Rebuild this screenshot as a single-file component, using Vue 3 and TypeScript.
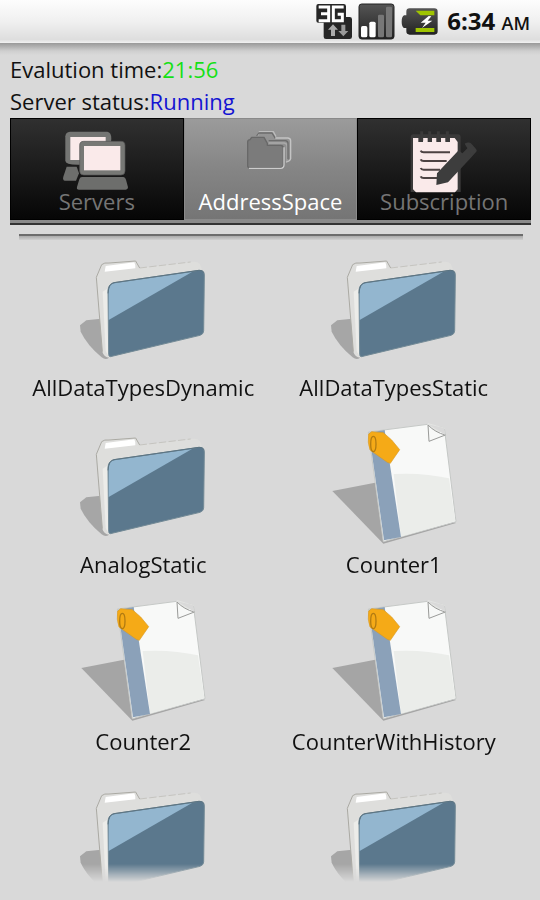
<script setup lang="ts">
import { ref } from 'vue'

type TabId = 'servers' | 'address' | 'subscription'
interface Node {
  name: string
  kind: 'folder' | 'item'
}

const tabs: { id: TabId; label: string }[] = [
  { id: 'servers', label: 'Servers' },
  { id: 'address', label: 'AddressSpace' },
  { id: 'subscription', label: 'Subscription' },
]
const active = ref<TabId>('address')

const nodes: Node[] = [
  { name: 'AllDataTypesDynamic', kind: 'folder' },
  { name: 'AllDataTypesStatic', kind: 'folder' },
  { name: 'AnalogStatic', kind: 'folder' },
  { name: 'Counter1', kind: 'item' },
  { name: 'Counter2', kind: 'item' },
  { name: 'CounterWithHistory', kind: 'item' },
  { name: '', kind: 'folder' },
  { name: '', kind: 'folder' },
]
</script>

<template>
  <div class="screen">
    <header class="statusbar">
      <svg class="status-icons" viewBox="36 0 372 129" aria-hidden="true">
        <defs>
          <linearGradient id="darkTile" x1="0" y1="0" x2="0" y2="1">
            <stop offset="0" stop-color="#555" />
            <stop offset="1" stop-color="#222" />
          </linearGradient>
        </defs>
        <path d="M46 12H122Q129 12 129 19V51H140Q147 51 147 58V110Q147 117 140 117H69Q62 117 62 110V68H46Q40 68 40 62V18Q40 12 46 12Z" fill="#262626" />
        <path d="M47 21H77V62H47M54 41H77" fill="none" stroke="#fff" stroke-width="9" />
        <path d="M122 21H91V62H118V43H104" fill="none" stroke="#fff" stroke-width="9" />
        <path d="M90 73L105 89H96V108H84V89H75Z" fill="#aaa" />
        <path d="M121 109L106 93H115V74H127V93H136Z" fill="#999" />
        <rect x="168" y="12" width="105" height="105" rx="8" fill="url(#darkTile)" stroke="#222" stroke-width="3" />
        <rect x="174" y="78" width="19" height="34" rx="5" fill="#fff" />
        <rect x="199" y="65" width="19" height="47" rx="5" fill="#fff" />
        <rect x="225" y="44" width="18" height="68" rx="4" fill="#777" />
        <rect x="249" y="20" width="18" height="92" rx="4" fill="#777" />
        <path d="M320 25H394Q404 25 404 35V94Q404 104 394 104H320Q310 104 310 94V84H303Q296 80 296 65Q296 50 303 46H310V35Q310 25 320 25Z" fill="url(#darkTile)" />
        <path d="M338 32H394V46H352ZM338 96V84H394V96Z" fill="#9fc400" />
        <path d="M377 48L353 68H368L357 84L388 62H374L385 49Z" fill="#fff" />
      </svg>
      <time class="clock">6:34 <span class="ampm">AM</span></time>
    </header>

    <main class="content">
      <section class="info">
        <p>Evalution time:<span class="time">21:56</span></p>
        <p>Server status:<span class="running">Running</span></p>
      </section>

      <nav class="tabs">
        <button
          v-for="tab in tabs"
          :key="tab.id"
          type="button"
          class="tab"
          :class="{ active: active === tab.id }"
          @click="active = tab.id"
        >
          <svg v-if="tab.id === 'servers'" class="tab-icon" viewBox="195 36 192 192" aria-hidden="true">
            <path d="M210 59H322Q334 61 334 80L325 158H233Q196 158 196 146V73Q197 60 210 59Z" fill="#747573" />
            <rect x="211" y="75" width="106" height="69" fill="#faeaea" />
            <path d="M200 164H230L237 184L228 206H194Q187 203 190 194Z" fill="#6d6e6c" />
            <rect x="239" y="88" width="136" height="101" rx="12" fill="#777875" stroke="#555" stroke-width="2" />
            <rect x="252" y="102" width="109" height="73" fill="#faeaea" />
            <path d="M246 195H370Q376 195 378 203L384 226Q384 233 377 233H237Q229 233 231 225L238 202Q240 195 246 195Z" fill="#6d6e6c" />
          </svg>
          <svg v-else-if="tab.id === 'address'" class="tab-icon" viewBox="0 0 192 192" aria-hidden="true">
            <g fill="none" stroke-width="4" stroke-linejoin="round">
              <path d="M58 36L64 23H106L114 38" stroke="#bcbcbc" />
              <path d="M56 36L62 27H102L112 43" stroke="#6c6c6c" />
              <path d="M112 42H150Q158 43 158 51V104Q156 112 144 114" stroke="#c4c4c4" />
              <path d="M92 57H138Q147 58 147 66V112" stroke="#a9a9a9" />
              <path d="M92 50H142Q150 51 150 58V106" stroke="#6c6c6c" />
              <path d="M29 126V54Q29 48 36 47L41 40H78L88 58V64H128Q136 65 136 72V124Q136 131 128 131H36Q29 131 29 126Z" fill="#7b7b7b" stroke="#686868" />
              <path d="M33 133H128Q138 132 138 122V70" stroke="#ccc" />
            </g>
          </svg>
          <svg v-else class="tab-icon" viewBox="426 36 192 192" aria-hidden="true">
            <path d="M430 67H564Q572 67 572 76V240H422V76Q422 67 430 67Z" fill="#3b3a3a" />
            <path d="M429 78H445V90H459V78H473V90H486V78H499V90H513V78H526V90H540V78H554L563 90V232L555 241H438L429 232Z" fill="#faeaea" />
            <path d="M455 58V86M479 58V86M505 58V86M532 58V86" stroke="#3b3a3a" stroke-width="9" />
            <path d="M452 116Q454 121 461 121H540M452 142Q454 147 461 147H530M452 168Q454 173 461 173H510M452 193Q454 198 461 198H502" fill="none" stroke="#4c4242" stroke-width="6" />
            <path d="M499 219L501 184L566 115L577 124L597 104L584 95Q597 88 605 96L618 111Q623 117 616 122L602 138L534 211Z" fill="#3d3d3d" />
            <path d="M584 95L597 92L618 115L604 128Z" fill="#3d3d3d" />
          </svg>
          <span class="tab-label">{{ tab.label }}</span>
        </button>
      </nav>

      <hr class="divider" />

      <section class="grid">
        <a v-for="(node, i) in nodes" :key="i" href="#" class="node">
          <svg v-if="node.kind === 'folder'" class="node-icon" viewBox="57 -15 390 390" aria-hidden="true">
            <path d="M63 241L82 226L126 221L150 338Q140 346 128 337Q84 300 65 260Z" fill="#a6a6a6" />
            <path d="M112 97L128 59L150 52L232 48L242 69L405 50Q427 50 429 78L152 338Q134 336 130 320Z" fill="#dededc" />
            <path d="M130 320L112 97L128 59Q136 52 150 54L230 48L242 69" fill="none" stroke="#aaa9a3" stroke-width="3" />
            <path d="M242 69L395 51" stroke="#b9b8b2" stroke-width="2" stroke-dasharray="22 7" />
            <path d="M140 63L226 52Q230 60 229 70L137 80Z" fill="#fff" />
            <path d="M131 140L140 318L150 336L147 130Z" fill="#ecece9" />
            <path d="M165 113L420 76Q436 75 436 90L434 257Q434 267 423 271L154 335Q149 335 149 328L147 135Q149 116 165 113Z" fill="#5b788d" stroke="#728995" stroke-width="3" />
            <path d="M166 115L399 81L149 225V137Q149 118 166 115Z" fill="#93b6cf" />
            <path d="M147 145Q149 116 165 113L420 76Q430 75 435 83" fill="none" stroke="#5c7482" stroke-width="3" />
          </svg>
          <svg v-else class="node-icon" viewBox="27 6 390 390" aria-hidden="true">
            <path d="M37 228L165 203L408 324L190 386Z" fill="#a5a5a5" />
            <path d="M145 51L323 28L373 39L408 320L190 380Z" fill="#f8f9f8" stroke="#c5c8c6" stroke-width="3" />
            <path d="M221 177Q310 172 387 190L406 318L243 365Z" fill="#ebedea" />
            <path d="M147 53L194 45L243 366L192 376Z" fill="#8ba1b9" />
            <path d="M323 24L376 39L327 79Z" fill="#e4e5e3" />
            <path d="M324 30L327 79L376 60Q345 52 324 30Z" fill="#f7f8f7" stroke="#9a9b99" stroke-width="3" />
            <path d="M324 28L375 59L373 39Z" fill="#d9d9d9" />
            <path d="M146 57L155 50L190 53L215 75L239 104L211 145L202 142L150 105Q142 82 146 57Z" fill="#f5aa17" stroke="#d99a22" stroke-width="2" />
            <ellipse cx="160" cy="87" rx="8" ry="23" fill="none" stroke="#b27b12" stroke-width="4" />
          </svg>
          <span v-if="node.name" class="node-label">{{ node.name }}</span>
        </a>
      </section>
    </main>
  </div>
</template>

<style>
body {
  margin: 0;
  background: #d9d9d9;
}
</style>

<style scoped>
.screen {
  height: 100vh;
  display: flex;
  flex-direction: column;
  box-sizing: border-box;
  padding-bottom: 18px;
  overflow: hidden;
  background: #d9d9d9;
  color: #111;
  font-family: "Open Sans", "Noto Sans", sans-serif;
  font-size: 22px;
}
.statusbar {
  flex: none;
  display: flex;
  align-items: center;
  justify-content: flex-end;
  gap: 8px;
  height: 43px;
  padding-right: 10px;
  background: linear-gradient(#fdfdfd, #f0f0f0 50%, #dedede 92%, #f2f2f2);
}
.status-icons {
  width: 124px;
  height: 43px;
}
.clock {
  font-size: 24px;
  font-weight: 700;
  line-height: 44px;
  white-space: nowrap;
}
.ampm {
  font-size: 18px;
  font-weight: 600;
}
.content {
  flex: 1;
  min-height: 0;
  display: flex;
  flex-direction: column;
  padding: 10px 9px 0 10px;
  background: linear-gradient(#999, #cfcfcf 8px, #d9d9d9 12px);
}
.info {
  padding-bottom: 1px;
}
.info p {
  margin: 0;
  line-height: 32px;
}
.time {
  color: #16e016;
}
.running {
  color: #1414d2;
}
.tabs {
  flex: none;
  display: grid;
  grid-template-columns: repeat(3, 1fr);
  padding-bottom: 3px;
  background: #8a8a8a;
  border-bottom: 2px solid #333;
}
.tab {
  display: flex;
  flex-direction: column;
  align-items: center;
  min-width: 0;
  padding: 5px 0;
  border: 1px solid #000;
  background: linear-gradient(#303030, #1b1b1b 50%, #060606);
  color: #757575;
  font: inherit;
}
.tab.active {
  border-color: #8a8a8a;
  background: linear-gradient(#9b9b9b, #858585 50%, #757575);
  color: #fff;
}
.tab-icon {
  width: 64px;
  height: 64px;
  overflow: visible;
}
.tab-label {
  position: relative;
  line-height: 26px;
}
.divider {
  flex: none;
  width: calc(100% - 17px);
  height: 6px;
  margin: 9px auto 0;
  border: 0;
  background: linear-gradient(#6c6c6c 2px, #aaa 2px, #d0d0d0);
}
.grid {
  flex: 1;
  min-height: 0;
  display: grid;
  grid-template-columns: repeat(2, 1fr);
  grid-auto-rows: 161px;
  gap: 16px 0;
  padding: 0 12px 0 8px;
  overflow: hidden;
  mask-image: linear-gradient(to top, transparent, #000 18px);
}
.node {
  display: flex;
  flex-direction: column;
  align-items: center;
  gap: 3px;
  color: inherit;
  text-decoration: none;
}
.node-icon {
  width: 130px;
  height: 130px;
}
.node-label {
  line-height: 28px;
  white-space: nowrap;
}
</style>
